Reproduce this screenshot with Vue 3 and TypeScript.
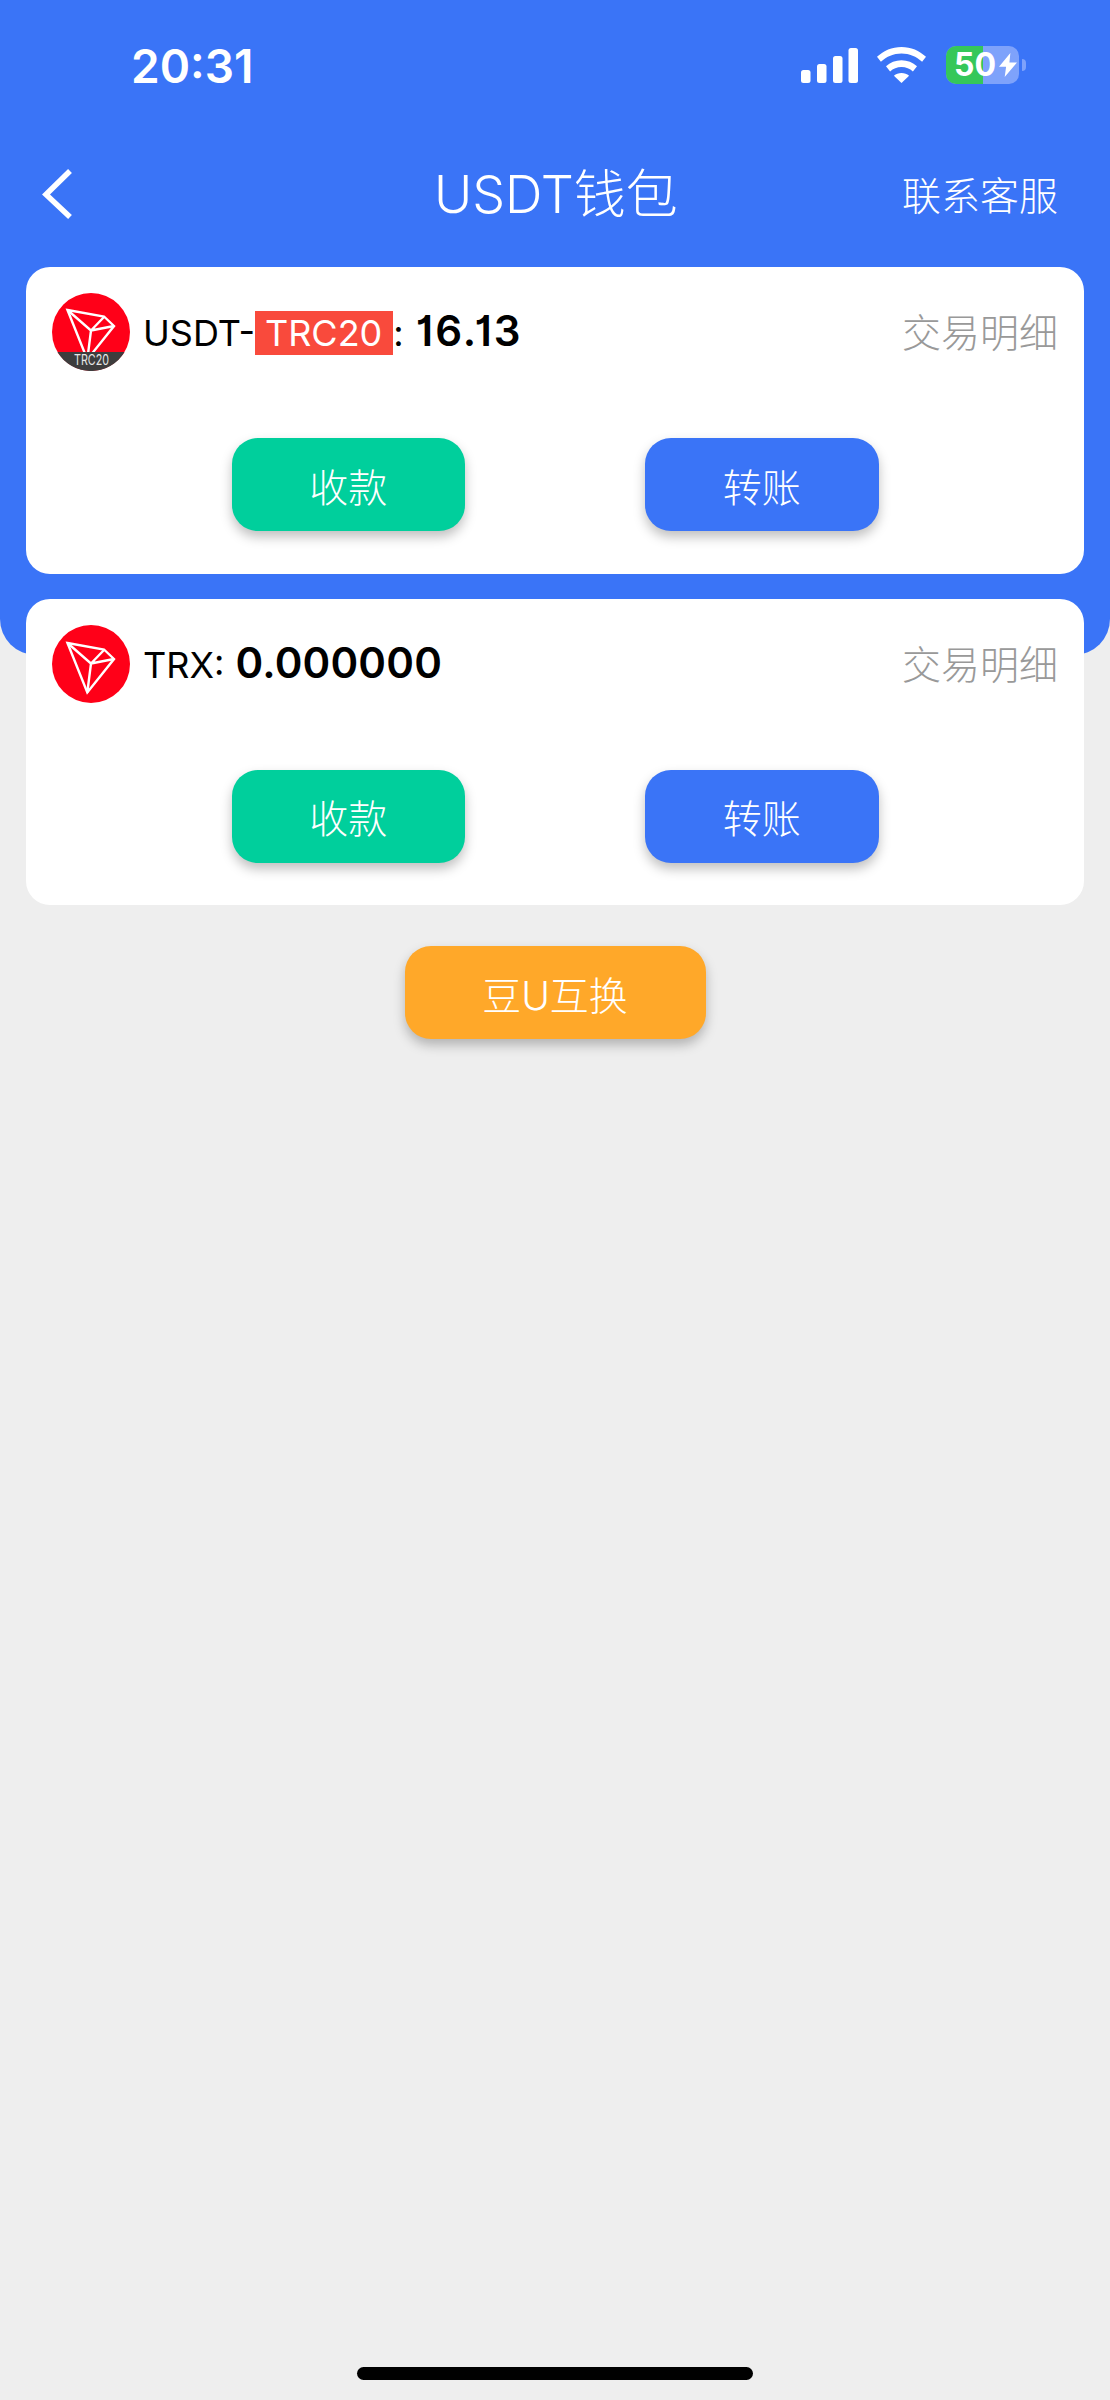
<template>
  <div class="page">
    <div class="hero"></div>
    <div class="status-bar">
      <span class="time">20:31</span>
      <div class="status-icons">
        <svg class="signal" width="57" height="35" viewBox="0 0 57 35" fill="#fff">
          <rect x="0" y="22" width="9.5" height="13" rx="2.5" />
          <rect x="16" y="16" width="9.5" height="19" rx="2.5" />
          <rect x="32" y="8" width="9.5" height="27" rx="2.5" />
          <rect x="47.5" y="0" width="9.5" height="35" rx="2.5" />
        </svg>
        <svg class="wifi" width="49" height="36" viewBox="0 0 49 36" fill="#fff">
          <path d="M24.5 0C15 0 6.6 3.7 0 9.8l3.9 5C9.6 9.700 16.700 6.600 24.500 6.600S39.400 9.700 45.100 14.800l3.900-5C42.400 3.700 34 0 24.500 0z" />
          <path d="M24.500 13.200c-6 0-11.300 2.300-15.500 6l4.100 5.200c3-2.700 7-4.300 11.400-4.300s8.400 1.600 11.400 4.300l4.100-5.200c-4.200-3.700-9.500-6-15.500-6z" />
          <path d="M24.500 26c-2.900 0-5.500 1-7.600 2.800L24.500 36l7.600-7.200C30 27 27.400 26 24.500 26z" />
        </svg>
        <div class="battery">
          <div class="battery-body">
            <div class="battery-fill" :style="{ width: battery + '%' }"></div>
            <span class="battery-num">{{ battery }}</span>
            <svg class="bolt" width="18" height="24" viewBox="0 0 19 28" preserveAspectRatio="none" fill="#fff">
              <path d="M12 0 0 16h7.500L6 28l13-17h-8z" />
            </svg>
          </div>
          <span class="battery-nub"></span>
        </div>
      </div>
    </div>

    <header class="nav-bar">
      <svg class="back" width="30" height="50" viewBox="0 0 30 50" fill="none" stroke="#fff" stroke-width="5.500">
        <path d="M28 2 4 25.500 28 48" />
      </svg>
      <h1 class="nav-title">USDT钱包</h1>
      <span class="nav-link">联系客服</span>
    </header>

    <main class="wallets">
      <section v-for="w in wallets" :key="w.id" class="wallet-card">
        <div class="wallet-head">
          <div class="coin">
            <svg width="78" height="78" viewBox="0 0 78 78">
              <circle cx="39" cy="39" r="39" fill="#ff0018" />
              <g fill="none" stroke="#fff" stroke-width="2.400" stroke-linejoin="miter" :transform="w.tag ? 'translate(0 -1)' : undefined">
                <path d="M15.500 18 52 24.500 62 34 35.300 67.500z" />
                <path d="M15.500 18 39 38.500 35.300 67.500M39 38.500 62 34M39 38.500 52 25" />
              </g>
              <template v-if="w.tag">
                <path d="M5.500 59h67A39 39 0 0 1 5.500 59z" fill="#3d3d3d" />
                <text x="22" y="72" class="coin-text" textLength="35" lengthAdjust="spacingAndGlyphs">TRC20</text>
              </template>
            </svg>
          </div>
          <div class="balance-line">
            <span>{{ w.name }}</span><span v-if="w.tag" class="tag">{{ w.tag }}</span><span>: </span>
            <span class="amount" :class="{ wide: w.tag }">{{ w.amount }}</span>
          </div>
          <span class="detail">交易明细</span>
        </div>
        <div class="wallet-actions">
          <button class="action green">收款</button>
          <button class="action blue">转账</button>
        </div>
      </section>
      <button class="action orange swap">豆U互换</button>
    </main>

    <div class="home-indicator"></div>
  </div>
</template>

<script setup lang="ts">
const battery = 50
const wallets = [
  { id: 'usdt', name: 'USDT-', tag: 'TRC20', amount: '16.13' },
  { id: 'trx', name: 'TRX', tag: '', amount: '0.000000' },
]
</script>

<style>
html,
body {
  margin: 0;
  background: #eee;
}
</style>

<style scoped>
.page {
  position: relative;
  width: 1110px;
  height: 2400px;
  background: #eee;
  overflow: hidden;
  font-family: Inter, "Noto Sans CJK SC", sans-serif;
}
.hero {
  position: absolute;
  left: 0;
  top: 0;
  width: 100%;
  height: 655px;
  background: #3a74f7;
  border-radius: 0 0 36px 36px;
}
.status-bar {
  position: relative;
  height: 132px;
  display: flex;
  justify-content: space-between;
  padding: 0 84px 0 131px;
  box-sizing: border-box;
}
.time {
  margin-top: 38px;
  font-size: 46px;
  line-height: 56px;
  font-weight: 600;
  color: #fff;
}
.status-icons {
  display: flex;
  align-items: flex-start;
  margin-top: 46px;
}
.signal { margin-top: 2px; }
.wifi { margin: 1px 20px 0 19px; }
.battery {
  display: flex;
  align-items: center;
}
.battery-body {
  position: relative;
  width: 73px;
  height: 38px;
  border-radius: 10px;
  background: #7ea2fb;
  overflow: hidden;
  display: flex;
  align-items: center;
  padding-left: 8px;
  box-sizing: border-box;
}
.battery-fill {
  position: absolute;
  left: 0;
  top: 0;
  height: 100%;
  background: #35c759;
}
.battery-num {
  position: relative;
  font-size: 32px;
  line-height: 38px;
  font-weight: 700;
  color: #fff;
}
.bolt {
  position: relative;
  flex: none;
  margin-left: 3px;
}
.battery-nub {
  width: 4px;
  height: 12px;
  margin-left: 3px;
  border-radius: 0 4px 4px 0;
  background: #7ea2fb;
}
.nav-bar {
  position: relative;
  height: 135px;
  display: flex;
  align-items: flex-start;
  padding: 37px 52px 0 42px;
  box-sizing: border-box;
}
.back {
  flex: none;
}
.nav-title {
  margin: -4px 0 0 362px;
  font-size: 52px;
  line-height: 60px;
  font-weight: 300;
  color: #fff;
  white-space: nowrap;
}
.nav-link {
  margin: 3px 0 0 auto;
  font-size: 39px;
  line-height: 48px;
  font-weight: 300;
  color: #fff;
}
.wallets {
  position: relative;
  display: flex;
  flex-direction: column;
  align-items: center;
  gap: 25px;
  padding: 0 26px;
}
.wallet-card {
  width: 100%;
  height: 306.500px;
  padding: 26px 26px 0;
  box-sizing: border-box;
  background: #fff;
  border-radius: 24px;
}
.wallet-head {
  display: flex;
  align-items: center;
  height: 78px;
}
.coin {
  flex: none;
  width: 78px;
  height: 78px;
  margin-right: 13px;
}
.coin svg {
  display: block;
}
.coin-text {
  font-size: 14px;
  fill: #e6e6e6;
}
.balance-line {
  font-size: 36px;
  line-height: 44px;
  font-weight: 400;
  color: #000;
  white-space: pre;
}
.tag {
  display: inline-block;
  padding: 0 11px 0 10px;
  background: #f94a3c;
  color: #fff;
}
.amount {
  margin-left: 1px;
  font-size: 42px;
  font-weight: 600;
  letter-spacing: 0.2px;
  font-feature-settings: "cv01";
}
.amount.wide {
  margin-left: 2px;
  letter-spacing: 2px;
}
.detail {
  margin: 2px 0 0 auto;
  font-size: 39px;
  line-height: 44px;
  font-weight: 300;
  color: #999;
}
.wallet-actions {
  display: flex;
  justify-content: center;
  gap: 180px;
  margin-top: 67px;
}
.action {
  width: 233.500px;
  height: 93px;
  padding: 0;
  border: none;
  border-radius: 26px;
  font-family: inherit;
  font-size: 39px;
  font-weight: 300;
  color: #fff;
  box-shadow: 0 6px 12px rgba(0, 0, 0, 0.25);
}
.green { background: #00cf9c; }
.blue { background: #3a74f7; }
.orange { background: #ffa829; }
.swap {
  width: 301px;
  margin-top: 16px;
}
.home-indicator {
  position: absolute;
  left: 357px;
  top: 2367px;
  width: 396px;
  height: 13px;
  border-radius: 7px;
  background: #000;
}
</style>
